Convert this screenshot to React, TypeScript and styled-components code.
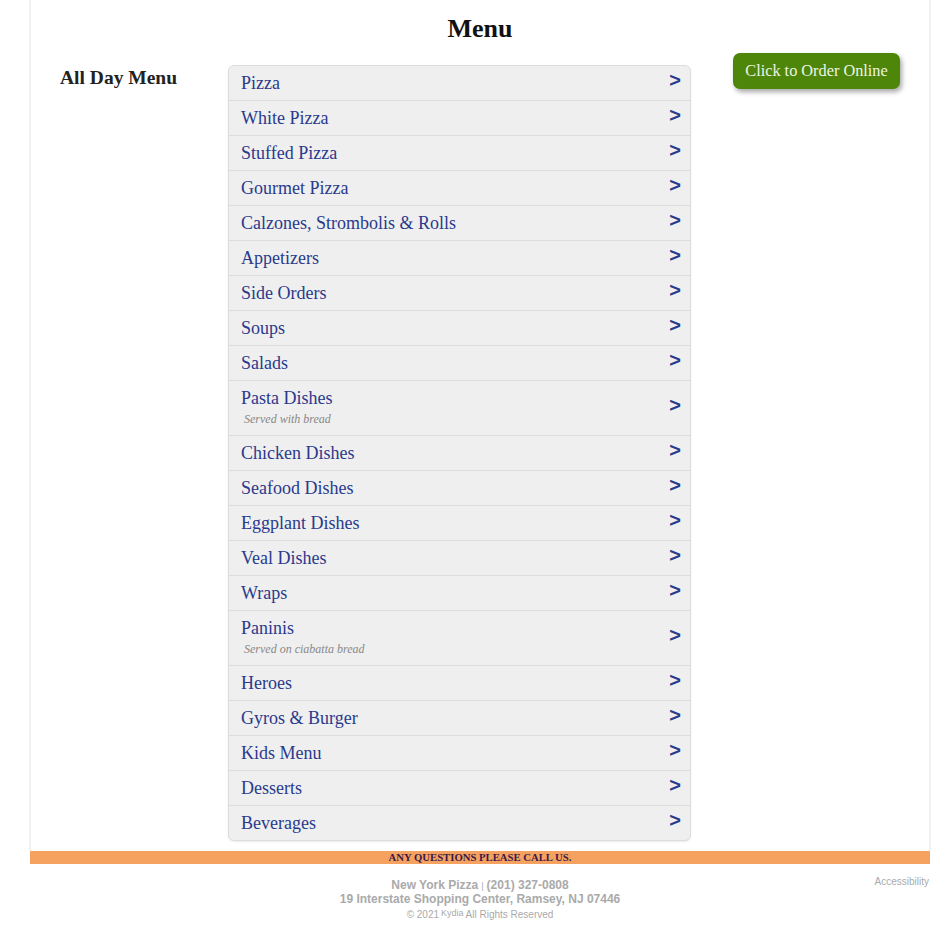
import React from 'react';
import styled, { createGlobalStyle } from 'styled-components';

const GlobalStyle = createGlobalStyle`
  body {
    margin: 0;
    background: #fff;
    font-family: "Liberation Serif", "Times New Roman", serif;
  }
`;

const Page = styled.div`
  width: 902px;
  margin-left: 29px;
`;

const Frame = styled.div`
  border-left: 2px solid #f1f1f1;
  border-right: 2px solid #f1f1f1;
  padding-bottom: 10px;
`;

const Title = styled.h1`
  margin: 0;
  padding-top: 14px;
  text-align: center;
  font-size: 26px;
  line-height: 30px;
  font-weight: bold;
  color: #111;
`;

const Body = styled.div`
  display: grid;
  grid-template-columns: 168px 463px 209px;
  padding-left: 29px;
  margin-top: 7px;
  align-items: start;
`;

const SectionName = styled.h2`
  margin: 0;
  padding-top: 15px;
  font-size: 19.5px;
  line-height: 24px;
  font-weight: bold;
  color: #222;
`;

const MenuList = styled.ul`
  list-style: none;
  margin: 14px 0 0;
  padding: 0;
  background: #efefef;
  border: 1px solid #dcdcdc;
  border-radius: 6px;
  box-shadow: 0 1px 2px rgba(0, 0, 0, 0.08);
  overflow: hidden;
`;

const Row = styled.li`
  display: flex;
  align-items: center;
  justify-content: space-between;
  padding: 6px 9px 6px 12px;
  border-bottom: 1px solid #dcdcdc;
  &:last-child {
    border-bottom: none;
  }
`;

const RowText = styled.div`
  display: flex;
  flex-direction: column;
`;

const RowTitle = styled.span`
  font-size: 18px;
  line-height: 22px;
  color: #2a3a8c;
`;

const RowNote = styled.span`
  font-size: 12px;
  line-height: 20px;
  font-style: italic;
  color: #888;
  margin-left: 3px;
`;

const Arrow = styled.span`
  font-family: "Liberation Sans", Arial, sans-serif;
  font-weight: bold;
  font-size: 20px;
  line-height: 16px;
  color: #2a3a8c;
  margin-bottom: 6px;
`;

const OrderButton = styled.a`
  display: block;
  width: 167px;
  margin: 2px 0 0 42px;
  height: 36px;
  line-height: 36px;
  text-align: center;
  white-space: nowrap;
  background: #4e8609;
  color: #eef5e4;
  font-size: 16.3px;
  border-radius: 7px;
  box-shadow: 2px 3px 5px rgba(0, 0, 0, 0.35);
  text-decoration: none;
  cursor: pointer;
`;

const CallBar = styled.div`
  margin: 0 1px;
  background: #f5a261;
  text-align: center;
  font-size: 10.7px;
  line-height: 13px;
  font-weight: bold;
  color: #3b1848;
`;

const Footer = styled.footer`
  position: relative;
  padding-top: 14px;
  text-align: center;
  font-family: "Liberation Sans", Arial, sans-serif;
  color: #aaa;
`;

const FooterLine = styled.div<{ $small?: boolean }>`
  font-size: ${(p) => (p.$small ? '10px' : '12px')};
  line-height: 14px;
  height: ${(p) => (p.$small ? '16px' : '14px')};
  font-weight: ${(p) => (p.$small ? 'normal' : 'bold')};
  margin-top: ${(p) => (p.$small ? '2px' : '0')};
`;

const Sep = styled.span`
  font-size: 9px;
  font-weight: normal;
  margin: 0 3px;
`;

const Kydia = styled.sup`
  font-size: 9px;
  line-height: 0;
  vertical-align: 2px;
  margin: 0 2px;
`;

const Accessibility = styled.a`
  position: absolute;
  right: 2px;
  top: 12px;
  font-size: 10px;
  color: #aaa;
  text-decoration: none;
`;

const items: { name: string; note?: string }[] = [
  { name: 'Pizza' },
  { name: 'White Pizza' },
  { name: 'Stuffed Pizza' },
  { name: 'Gourmet Pizza' },
  { name: 'Calzones, Strombolis & Rolls' },
  { name: 'Appetizers' },
  { name: 'Side Orders' },
  { name: 'Soups' },
  { name: 'Salads' },
  { name: 'Pasta Dishes', note: 'Served with bread' },
  { name: 'Chicken Dishes' },
  { name: 'Seafood Dishes' },
  { name: 'Eggplant Dishes' },
  { name: 'Veal Dishes' },
  { name: 'Wraps' },
  { name: 'Paninis', note: 'Served on ciabatta bread' },
  { name: 'Heroes' },
  { name: 'Gyros & Burger' },
  { name: 'Kids Menu' },
  { name: 'Desserts' },
  { name: 'Beverages' },
];

const App: React.FC = () => {
  return (
    <Page>
      <GlobalStyle />
      <Frame>
        <Title>Menu</Title>
        <Body>
          <SectionName>All Day Menu</SectionName>
          <MenuList>
            {items.map((item) => (
              <Row key={item.name}>
                <RowText>
                  <RowTitle>{item.name}</RowTitle>
                  {item.note && <RowNote>{item.note}</RowNote>}
                </RowText>
                <Arrow>&gt;</Arrow>
              </Row>
            ))}
          </MenuList>
          <OrderButton>Click to Order Online</OrderButton>
        </Body>
      </Frame>
      <CallBar>ANY QUESTIONS PLEASE CALL US.</CallBar>
      <Footer>
        <FooterLine>
          New York Pizza<Sep>|</Sep>(201) 327-0808
        </FooterLine>
        <FooterLine>19 Interstate Shopping Center, Ramsey, NJ 07446</FooterLine>
        <FooterLine $small>
          © 2021<Kydia>Kydia</Kydia>All Rights Reserved
        </FooterLine>
        <Accessibility>Accessibility</Accessibility>
      </Footer>
    </Page>
  );
};

export default App;
